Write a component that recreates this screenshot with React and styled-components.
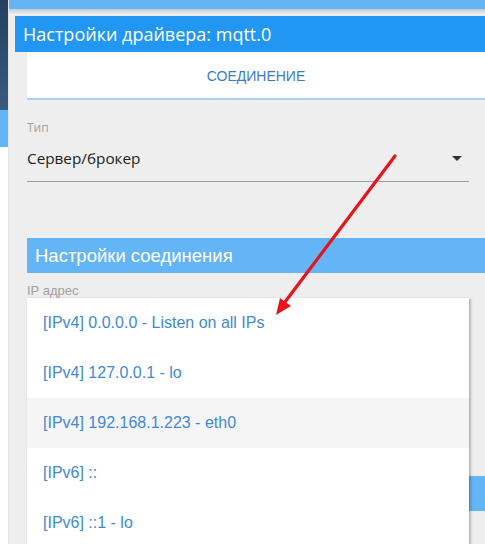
import styled, { createGlobalStyle } from "styled-components";

const Global = createGlobalStyle`
  html, body {
    margin: 0;
    padding: 0;
    background: #ffffff;
  }
  * {
    box-sizing: border-box;
  }
`;

const Page = styled.div`
  position: relative;
  display: flex;
  width: 485px;
  height: 544px;
  overflow: hidden;
`;

const Sidebar = styled.div`
  width: 9px;
  flex-shrink: 0;
  background: linear-gradient(
      to bottom,
      transparent 0 110px,
      #64b5f6 110px 147px,
      #ffffff 147px
    ),
    linear-gradient(160deg, #23405f 0%, #4f7da6 45%, #2c4a6a 100%);
  border-right: 1px solid #e4e4e4;
`;

const Main = styled.div`
  flex: 1;
  display: flex;
  flex-direction: column;
  background: #eeeeee;
  min-width: 0;
`;

const TopBar = styled.div`
  height: 9px;
  background: #64b5f6;
`;

const TopShadow = styled.div`
  height: 7px;
  background: linear-gradient(to bottom, #c9c9c9, #eeeeee 5px);
`;

const Dialog = styled.div`
  padding-left: 6px;
`;

const Header = styled.div`
  height: 36px;
  padding-left: 8px;
  background: #2196f3;
  color: #ffffff;
  font-family: "Open Sans", "Noto Sans", sans-serif;
  font-size: 18px;
  line-height: 36px;
  white-space: nowrap;
`;

const Body = styled.div`
  padding-left: 12px;
`;

const Tabs = styled.div`
  height: 48px;
  display: flex;
  align-items: center;
  justify-content: center;
  background: #ffffff;
  border-bottom: 2px solid #a8d0f4;
`;

const Tab = styled.div`
  font-family: "Liberation Sans", Arial, sans-serif;
  font-size: 14px;
  color: #3b7bc6;
  text-transform: uppercase;
  padding-top: 2px;
`;

const Field = styled.div`
  position: relative;
  margin-top: ${(p) => p.$top}px;
  margin-right: 16px;
`;

const Label = styled.div`
  font-family: ${(p) =>
    p.$arial
      ? `"Liberation Sans", Arial, sans-serif`
      : `"Open Sans", "Noto Sans", sans-serif`};
  font-size: ${(p) => (p.$arial ? 13 : 12)}px;
  line-height: 16px;
  color: #a0a0a0;
`;

const Select = styled.div`
  display: flex;
  align-items: center;
  justify-content: space-between;
  margin-top: 11px;
  padding-bottom: 12px;
  border-bottom: 1px solid #9e9e9e;
  font-family: "Open Sans", "Noto Sans", sans-serif;
  font-size: 15.3px;
  line-height: 22px;
  color: #212121;
`;

const Caret = styled.svg`
  width: 24px;
  height: 24px;
  margin: -1px 0;
  fill: #333333;
`;

const SectionBar = styled.div`
  height: 35px;
  margin-top: ${(p) => p.$top}px;
  padding-left: 8px;
  background: #64b5f6;
  color: #ffffff;
  font-family: "Liberation Sans", Arial, sans-serif;
  font-size: 18.5px;
  line-height: 35px;
  white-space: nowrap;
`;

const HiddenValue = styled.div`
  height: 38px;
  border-bottom: 1px solid #9e9e9e;
`;

const Menu = styled.ul`
  position: absolute;
  top: 15px;
  left: 0;
  right: 0;
  z-index: 2;
  margin: 0;
  padding: 0;
  list-style: none;
  background: #ffffff;
  box-shadow: 2px 1px 2px rgba(0, 0, 0, 0.22), 0 0 2px rgba(0, 0, 0, 0.08);
`;

const MenuItem = styled.li`
  height: 50px;
  padding-left: 16px;
  display: flex;
  align-items: center;
  background: ${(p) => (p.$hover ? "#f5f5f5" : "#ffffff")};
  font-family: "Liberation Sans", Arial, sans-serif;
  font-size: 16px;
  color: #4189d6;
  white-space: nowrap;
`;

const Annotation = styled.svg`
  position: absolute;
  left: 0;
  top: 0;
  z-index: 5;
  pointer-events: none;
`;

const ips = [
  "[IPv4] 0.0.0.0 - Listen on all IPs",
  "[IPv4] 127.0.0.1 - lo",
  "[IPv4] 192.168.1.223 - eth0",
  "[IPv6] ::",
  "[IPv6] ::1 - lo",
];

export default function App() {
  return (
    <Page>
      <Global />
      <Sidebar />
      <Main>
        <TopBar />
        <TopShadow />
        <Dialog>
          <Header>Настройки драйвера: mqtt.0</Header>
          <Body>
            <Tabs>
              <Tab>Соединение</Tab>
            </Tabs>
            <Field $top={20}>
              <Label>Тип</Label>
              <Select>
                <span>Сервер/брокер</span>
                <Caret viewBox="0 0 24 24">
                  <path d="M7 10l5 5 5-5z" />
                </Caret>
              </Select>
            </Field>
            <SectionBar $top={56}>Настройки соединения</SectionBar>
            <Field $top={10}>
              <Label $arial>IP адрес</Label>
              <HiddenValue />
              <Menu>
                {ips.map((ip, i) => (
                  <MenuItem key={ip} $hover={i === 2}>
                    {ip}
                  </MenuItem>
                ))}
              </Menu>
            </Field>
            <SectionBar $top={139} />
          </Body>
        </Dialog>
      </Main>
      <Annotation width="485" height="544" viewBox="0 0 485 544">
        <line
          x1="395"
          y1="156"
          x2="285"
          y2="302"
          stroke="#e8141c"
          strokeWidth="3.2"
          strokeLinecap="round"
        />
        <polygon points="276,315 291,306 280,298" fill="#e8141c" />
      </Annotation>
    </Page>
  );
}
